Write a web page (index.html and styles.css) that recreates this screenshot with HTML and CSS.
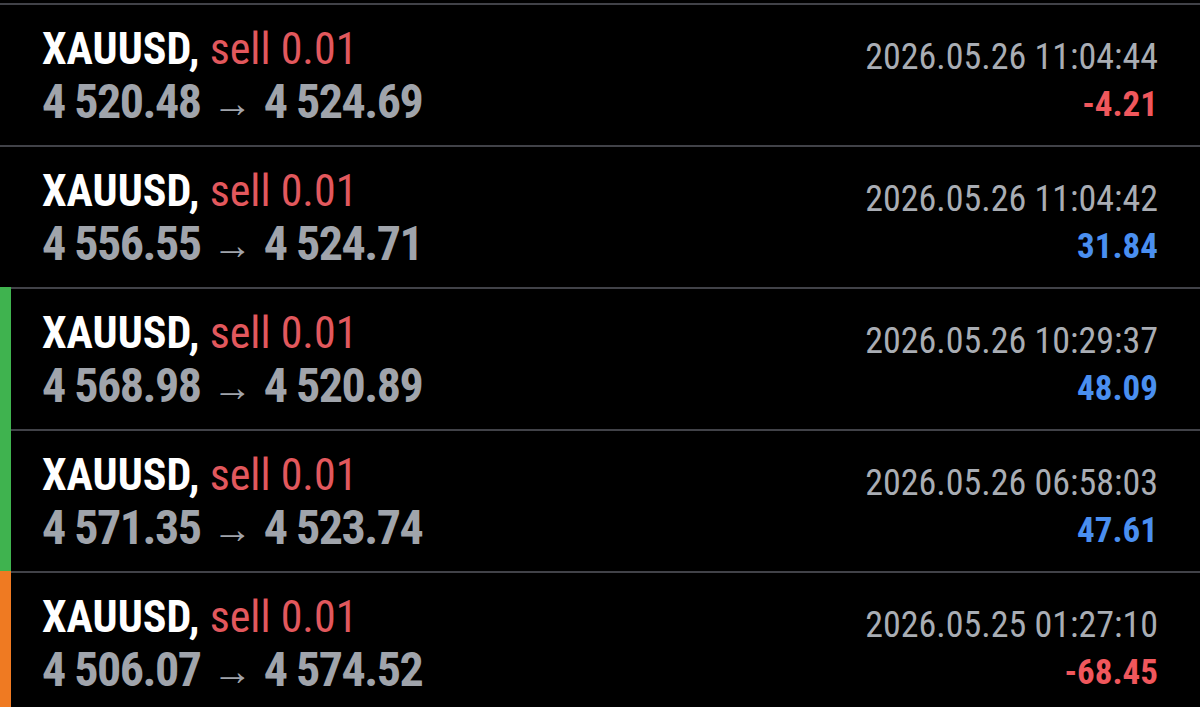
FILE: index.html
```html
<!DOCTYPE html>
<html lang="en">
<head>
  <meta charset="UTF-8" />
  <meta name="viewport" content="width=device-width, initial-scale=1.0" />
  <title>History</title>
  <link rel="stylesheet" href="styles.css">
</head>
<body>
  <ul class="deals">
    <li class="deal">
      <div class="mark"></div>
      <div class="deal-body">
        <div class="info">
          <div class="title">XAUUSD, <span class="side">sell 0.01</span></div>
          <div class="prices">4 520.48 <span class="arrow">&rarr;</span> 4 524.69</div>
        </div>
        <div class="meta">
          <div class="time">2026.05.26 11:04:44</div>
          <div class="profit loss">-4.21</div>
        </div>
      </div>
    </li>
    <li class="deal">
      <div class="mark"></div>
      <div class="deal-body">
        <div class="info">
          <div class="title">XAUUSD, <span class="side">sell 0.01</span></div>
          <div class="prices">4 556.55 <span class="arrow">&rarr;</span> 4 524.71</div>
        </div>
        <div class="meta">
          <div class="time">2026.05.26 11:04:42</div>
          <div class="profit gain">31.84</div>
        </div>
      </div>
    </li>
    <li class="deal">
      <div class="mark green"></div>
      <div class="deal-body">
        <div class="info">
          <div class="title">XAUUSD, <span class="side">sell 0.01</span></div>
          <div class="prices">4 568.98 <span class="arrow">&rarr;</span> 4 520.89</div>
        </div>
        <div class="meta">
          <div class="time">2026.05.26 10:29:37</div>
          <div class="profit gain">48.09</div>
        </div>
      </div>
    </li>
    <li class="deal">
      <div class="mark green"></div>
      <div class="deal-body">
        <div class="info">
          <div class="title">XAUUSD, <span class="side">sell 0.01</span></div>
          <div class="prices">4 571.35 <span class="arrow">&rarr;</span> 4 523.74</div>
        </div>
        <div class="meta">
          <div class="time">2026.05.26 06:58:03</div>
          <div class="profit gain">47.61</div>
        </div>
      </div>
    </li>
    <li class="deal">
      <div class="mark orange"></div>
      <div class="deal-body">
        <div class="info">
          <div class="title">XAUUSD, <span class="side">sell 0.01</span></div>
          <div class="prices">4 506.07 <span class="arrow">&rarr;</span> 4 574.52</div>
        </div>
        <div class="meta">
          <div class="time">2026.05.25 01:27:10</div>
          <div class="profit loss">-68.45</div>
        </div>
      </div>
    </li>
  </ul>
</body>
</html>
```

FILE: styles.css
```css
body {
  margin: 0;
  background: #000;
  font-family: "Roboto Condensed", Roboto, "Liberation Sans", sans-serif;
  font-stretch: 75%;
  overflow: hidden;
}
.deals {
  list-style: none;
  margin: 0;
  padding: 3px 0 0;
}
.deal {
  display: flex;
  height: 142px;
}
.mark {
  width: 11px;
  border-top: 2px solid #414248;
}
.mark.green {
  background: #3fb34f;
  border-top: none;
}
.mark.orange {
  background: #ef7a22;
  border-top: none;
}
.deal-body {
  flex: 1;
  display: flex;
  justify-content: space-between;
  border-top: 2px solid #414248;
  padding: 0 42px 0 31px;
}
.info {
  padding-top: 19px;
}
.title {
  font-size: 44px;
  font-weight: 700;
  color: #fff;
  line-height: 50px;
}
.side {
  font-weight: 400;
  color: #e2585d;
}
.prices {
  font-size: 48px;
  font-weight: 700;
  color: #a0a4ab;
  line-height: 56px;
  letter-spacing: -1.5px;
}
.arrow {
  font-weight: 400;
  font-size: 40px;
  margin: 0 2px;
  letter-spacing: 0;
  vertical-align: 1px;
}
.meta {
  text-align: right;
  padding-top: 28px;
}
.time {
  font-size: 36px;
  color: #a9adb4;
  line-height: 48px;
}
.profit {
  font-size: 35px;
  font-weight: 700;
  line-height: 48px;
}
.loss {
  color: #f0575c;
}
.gain {
  color: #4a8ff0;
}
```
